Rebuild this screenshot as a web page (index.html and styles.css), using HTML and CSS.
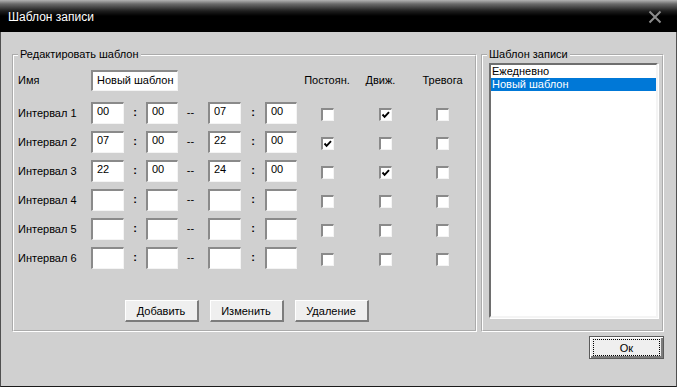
FILE: index.html
```html
<!DOCTYPE html>
<html lang="ru">
<head>
    <meta charset="UTF-8">
    <title>Шаблон записи</title>
    <link rel="stylesheet" href="styles.css">
</head>
<body>
    <div class="window">
        <div class="titlebar">
            <span class="title">Шаблон записи</span>
            <svg class="close" width="14" height="14" viewBox="0 0 14 14">
                <path d="M1.5 1.5 L12.5 12.5 M12.5 1.5 L1.5 12.5" stroke="#8c8c8c" stroke-width="2" fill="none"/>
            </svg>
        </div>

        <div class="content">
            <div class="panes">
                <!-- Edit template -->
                <fieldset class="group edit">
                    <legend>Редактировать шаблон</legend>
                    <div class="grid">
                        <span class="lbl">Имя</span>
                        <input class="field name" type="text" value="Новый шаблон">
                        <span class="head">Постоян.</span>
                        <span class="head move">Движ.</span>
                        <span class="head">Тревога</span>

                        <span class="lbl">Интервал 1</span>
                        <input class="field" type="text" value="00">
                        <span class="sep">:</span>
                        <input class="field" type="text" value="00">
                        <span class="sep dash">--</span>
                        <input class="field" type="text" value="07">
                        <span class="sep">:</span>
                        <input class="field" type="text" value="00">
                        <span class="cb"></span>
                        <span class="cb checked"></span>
                        <span class="cb"></span>

                        <span class="lbl">Интервал 2</span>
                        <input class="field" type="text" value="07">
                        <span class="sep">:</span>
                        <input class="field" type="text" value="00">
                        <span class="sep dash">--</span>
                        <input class="field" type="text" value="22">
                        <span class="sep">:</span>
                        <input class="field" type="text" value="00">
                        <span class="cb checked"></span>
                        <span class="cb"></span>
                        <span class="cb"></span>

                        <span class="lbl">Интервал 3</span>
                        <input class="field" type="text" value="22">
                        <span class="sep">:</span>
                        <input class="field" type="text" value="00">
                        <span class="sep dash">--</span>
                        <input class="field" type="text" value="24">
                        <span class="sep">:</span>
                        <input class="field" type="text" value="00">
                        <span class="cb"></span>
                        <span class="cb checked"></span>
                        <span class="cb"></span>

                        <span class="lbl">Интервал 4</span>
                        <input class="field" type="text">
                        <span class="sep">:</span>
                        <input class="field" type="text">
                        <span class="sep dash">--</span>
                        <input class="field" type="text">
                        <span class="sep">:</span>
                        <input class="field" type="text">
                        <span class="cb"></span>
                        <span class="cb"></span>
                        <span class="cb"></span>

                        <span class="lbl">Интервал 5</span>
                        <input class="field" type="text">
                        <span class="sep">:</span>
                        <input class="field" type="text">
                        <span class="sep dash">--</span>
                        <input class="field" type="text">
                        <span class="sep">:</span>
                        <input class="field" type="text">
                        <span class="cb"></span>
                        <span class="cb"></span>
                        <span class="cb"></span>

                        <span class="lbl">Интервал 6</span>
                        <input class="field" type="text">
                        <span class="sep">:</span>
                        <input class="field" type="text">
                        <span class="sep dash">--</span>
                        <input class="field" type="text">
                        <span class="sep">:</span>
                        <input class="field" type="text">
                        <span class="cb"></span>
                        <span class="cb"></span>
                        <span class="cb"></span>
                    </div>

                    <div class="actions">
                        <button class="btn">Добавить</button>
                        <button class="btn">Изменить</button>
                        <button class="btn">Удаление</button>
                    </div>
                </fieldset>

                <!-- Template list -->
                <fieldset class="group list">
                    <legend>Шаблон записи</legend>
                    <div class="listbox">
                        <div class="item">Ежедневно</div>
                        <div class="item selected">Новый шаблон</div>
                    </div>
                </fieldset>
            </div>

            <div class="footer">
                <button class="btn ok"><span class="focus">Ок</span></button>
            </div>
        </div>
    </div>
</body>
</html>
```

FILE: styles.css
```css
* {
    margin: 0;
    padding: 0;
    box-sizing: border-box;
}

body {
    font-family: 'Liberation Sans', Arial, sans-serif;
    font-size: 11px;
    color: #000;
    background: #d0d0d0;
}

.window {
    width: 677px;
    height: 387px;
    display: flex;
    flex-direction: column;
    background: #d0d0d0;
}

.titlebar {
    height: 32px;
    flex: none;
    display: flex;
    align-items: center;
    justify-content: space-between;
    padding: 2px 15px 0 8px;
    background: linear-gradient(to bottom, #b4b4b4 0, #6a6a6a 4px, #1e1e1e 11px, #000 16px, #000 100%);
}

.title {
    color: #fff;
    font-size: 12px;
}

.close {
    display: block;
}

.content {
    flex: 1;
    border-left: 1px solid #505050;
    border-right: 1px solid #505050;
    border-bottom: 1px solid #1a1a1a;
    padding: 16px 12px 0 11px;
}

.panes {
    display: flex;
    gap: 4px;
}

.group {
    min-width: 0;
    border: 2px groove #fff;
}

.group legend {
    padding: 0 2px;
    line-height: 13px;
    font-size: 11px;
}

.edit {
    width: 465px;
    padding: 9px 0 8px 4px;
}

.list {
    width: 183px;
    padding: 2px 4px 12px 6px;
}

.list legend {
    margin-left: -2px;
}

/* Edit grid */
.grid {
    display: grid;
    grid-template-columns: 73px 33px 22px 32px 30px 33px 24px 32px 60px 57px 57px;
    grid-template-rows: 25px repeat(6, 22px);
    row-gap: 7px;
}

.lbl {
    line-height: 22px;
    white-space: nowrap;
}

.grid .lbl:first-child {
    line-height: 21px;
}

.head {
    line-height: 21px;
    text-align: center;
    white-space: nowrap;
}

.head.move {
    padding-right: 10px;
}

.grid .head:nth-child(3) {
    grid-column: 9;
}

.field {
    width: 100%;
    height: 22px;
    font-family: inherit;
    font-size: 11px;
    color: #000;
    background: #fff;
    border-style: solid;
    border-width: 2px 1px 1px 2px;
    border-color: #8a8a8a #f4f4f4 #f4f4f4 #8a8a8a;
    padding: 0 0 5px 4px;
    outline: none;
}

.field.name {
    grid-column: 2 / 5;
    height: 21px;
    padding-bottom: 2px;
}

.sep {
    line-height: 20px;
    text-align: center;
    font-weight: bold;
}

.sep.dash {
    font-weight: normal;
    padding-right: 5px;
}

.cb {
    width: 13px;
    height: 13px;
    align-self: center;
    justify-self: center;
    background: #fff;
    border-style: solid;
    border-width: 2px 1px 1px 2px;
    border-color: #8a8a8a #f4f4f4 #f4f4f4 #8a8a8a;
    position: relative;
    top: 1px;
}

.cb.checked {
    background: #fff url("data:image/svg+xml,%3Csvg xmlns='http://www.w3.org/2000/svg' width='10' height='10'%3E%3Cpath d='M1.5 4.5 L3.6 6.8 L8 2.2' stroke='%23000' stroke-width='1.9' fill='none'/%3E%3C/svg%3E") no-repeat 0 0;
}

/* Buttons */
.actions {
    display: flex;
    justify-content: center;
    gap: 11px;
    margin-top: 31px;
}

.btn {
    width: 74px;
    height: 22px;
    font-family: inherit;
    font-size: 11px;
    color: #000;
    background: #efefef;
    border-style: solid;
    border-width: 1px 2px 2px 1px;
    border-color: #fff #7c7c7c #7c7c7c #fff;
    cursor: pointer;
}

.footer {
    display: flex;
    justify-content: flex-end;
    margin-top: 4px;
}

.btn.ok {
    width: 75px;
    height: 23px;
    padding: 2px;
    border: 1px solid #5a5a5a;
    box-shadow: inset 1px 1px #fff, inset -2px -2px #7c7c7c;
}

.focus {
    display: flex;
    align-items: center;
    justify-content: center;
    height: 100%;
    border: 1px dotted #000;
    margin: 0 1px;
}

/* List */
.listbox {
    height: 255px;
    background: #fff;
    border-style: solid;
    border-width: 2px;
    border-color: #6e6e6e #f4f4f4 #f4f4f4 #6e6e6e;
    box-shadow: 1px 1px 0 #fff;
}

.item {
    line-height: 13px;
    padding-left: 1px;
    white-space: nowrap;
}

.item.selected {
    background: #0078d7;
    color: #fff;
}
```
